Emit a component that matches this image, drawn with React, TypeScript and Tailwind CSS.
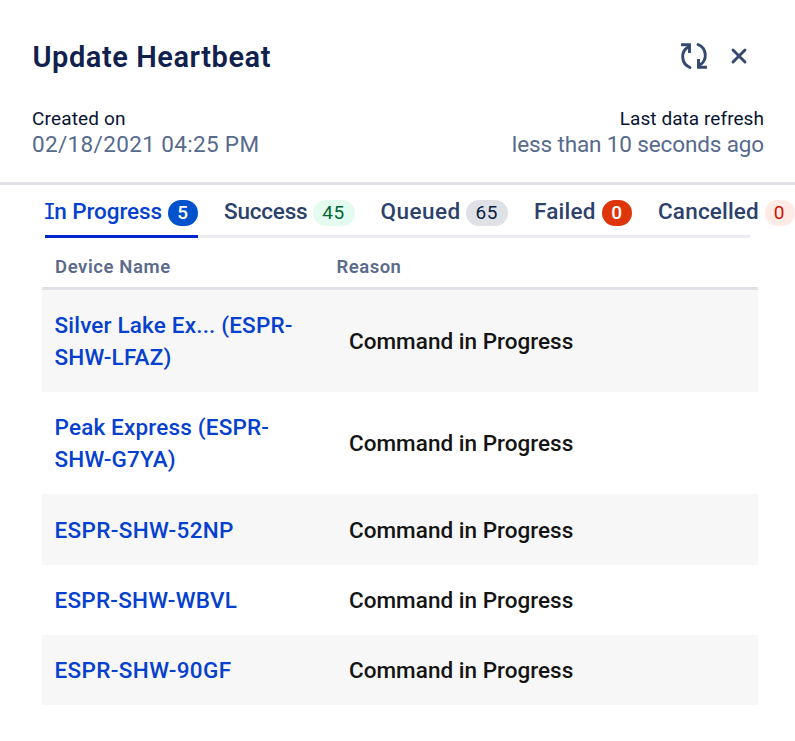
type Tab = {
  label: string;
  tracking: string;
  count: string;
  pill: string;
  active?: boolean;
};

const tabs: Tab[] = [
  { label: "In Progress", tracking: "w-[123px] tracking-[-0.1px]", count: "5", pill: "w-[30px] bg-[#0052cc] text-white font-medium", active: true },
  { label: "Success", tracking: "w-[88.5px] tracking-[-0.2px]", count: "45", pill: "w-[42px] bg-[#e3fcef] text-[#006633]" },
  { label: "Queued", tracking: "w-[85px] tracking-[0.45px]", count: "65", pill: "w-[42.5px] bg-[#dfe1e6] text-[#091e42]" },
  { label: "Failed", tracking: "w-[68px] tracking-[0.2px]", count: "0", pill: "w-[30px] bg-[#de350b] text-white font-medium" },
  { label: "Cancelled", tracking: "w-[106.5px] tracking-[0.18px]", count: "0", pill: "w-[30px] bg-[#ffebe6] text-[#cc1100]" },
];

const devices: { lines: string[]; tracking: string }[] = [
  { lines: ["Silver Lake Ex... (ESPR-", "SHW-LFAZ)"], tracking: "tracking-[0.18px]" },
  { lines: ["Peak Express (ESPR-", "SHW-G7YA)"], tracking: "tracking-[0.18px]" },
  { lines: ["ESPR-SHW-52NP"], tracking: "tracking-[0.35px]" },
  { lines: ["ESPR-SHW-WBVL"], tracking: "tracking-[0.25px]" },
  { lines: ["ESPR-SHW-90GF"], tracking: "tracking-[0.37px]" },
];

function TabLabel({ label }: { label: string }) {
  if (!label.startsWith("I")) return <>{label}</>;
  return (
    <>
      <span className="-ml-[2px] -mr-[1.5px] font-['DejaVu_Sans_Mono',monospace] text-[21.5px]">I</span>
      {label.slice(1)}
    </>
  );
}

export default function App() {
  return (
    <div className="h-[741px] w-[795px] overflow-hidden bg-white font-['Roboto','Liberation_Sans',sans-serif]">
      <header className="flex h-[185px] flex-col border-b-[3px] border-[#dfe1e6]">
        <div className="flex items-center justify-between pl-[32.5px] pr-[47px] pt-[37px]">
          <h1 className="text-[29px] font-semibold leading-[40px] tracking-[0.55px] text-[#11214d]">Update Heartbeat</h1>
          <div className="flex items-center gap-[22px] pb-[2px]">
            <svg width="28" height="28" viewBox="0 0 28 28" fill="none" stroke="#344870" strokeWidth="2.9" strokeLinecap="round">
              <path d="M10 25.5C1.500 22 -.5 10 8.800 4.500" />
              <path d="M2.500 2.700H9.500V9.500" strokeLinecap="square" />
              <path d="M18 2.500C26.500 6 28.500 18 19.200 23.500" />
              <path d="M25.500 25.300H18.500V18.500" strokeLinecap="square" />
            </svg>
            <svg width="18" height="18" viewBox="0 0 18 18" fill="none" stroke="#344870" strokeWidth="2.9" strokeLinecap="round">
              <path d="M3 3L15 15M15 3L3 15" />
            </svg>
          </div>
        </div>
        <div className="flex justify-between pl-[32px] pr-[31px] pt-[29px]">
          <div>
            <p className="text-[19px] leading-[25px] tracking-[0.15px] text-[#091433]">Created on</p>
            <p className="text-[22.5px] leading-[26px] tracking-[0.35px] text-[#566a8c]">02/18/2021 04:25 PM</p>
          </div>
          <div className="text-right">
            <p className="text-[19px] leading-[25px] tracking-[0.06px] text-[#091433]">Last data refresh</p>
            <p className="text-[22.5px] leading-[26px] tracking-[-0.13px] text-[#566a8c]">less than 10 seconds ago</p>
          </div>
        </div>
      </header>

      <nav className="ml-[45px] flex h-[53px] w-[706px] gap-[26px] rounded-sm border-b-[3px] border-[#ebecf0]">
        {tabs.map((tab) => (
          <button
            key={tab.label}
            className={
              tab.active
                ? "-mb-[3px] flex shrink-0 items-start border-b-[3px] border-[#0026cc] pt-[15px] text-[#0540cf]"
                : "flex shrink-0 items-start pt-[15px] text-[#2c416b]"
            }
          >
            <span className={`-mt-px text-left text-[22.5px] font-medium leading-[24px] whitespace-nowrap ${tab.tracking}`}>
              <TabLabel label={tab.label} />
            </span>
            <span className={`flex h-[25.5px] items-center justify-center rounded-full pt-px text-[19px] tracking-[0.6px] ${tab.pill}`}>{tab.count}</span>
          </button>
        ))}
      </nav>

      <main className="ml-[42px] w-[716px]">
        <div className="flex h-[51.6px] items-center border-b-[3px] border-[#dfe1e6] pt-[11px] text-[18.5px] font-semibold text-[#5c6b8a]">
          <span className="w-[281.5px] pl-[13px] tracking-[0.6px]">Device Name</span>
          <span className="pl-[13px] tracking-[0.5px]">Reason</span>
        </div>
        {devices.map((device) => (
          <div key={device.lines[0]} className="flex items-center py-[19.2px] text-[22.5px] font-medium leading-[32px] odd:bg-white even:bg-[#f7f7f7]">
            <a className={`w-[307px] pl-[12.5px] text-[#0540cf] ${device.tracking}`}>
              {device.lines.map((line) => (
                <span key={line} className="block whitespace-nowrap">{line}</span>
              ))}
            </a>
            <span className="tracking-[0.02px] text-[#141414]">Command in Progress</span>
          </div>
        ))}
      </main>
    </div>
  );
}
